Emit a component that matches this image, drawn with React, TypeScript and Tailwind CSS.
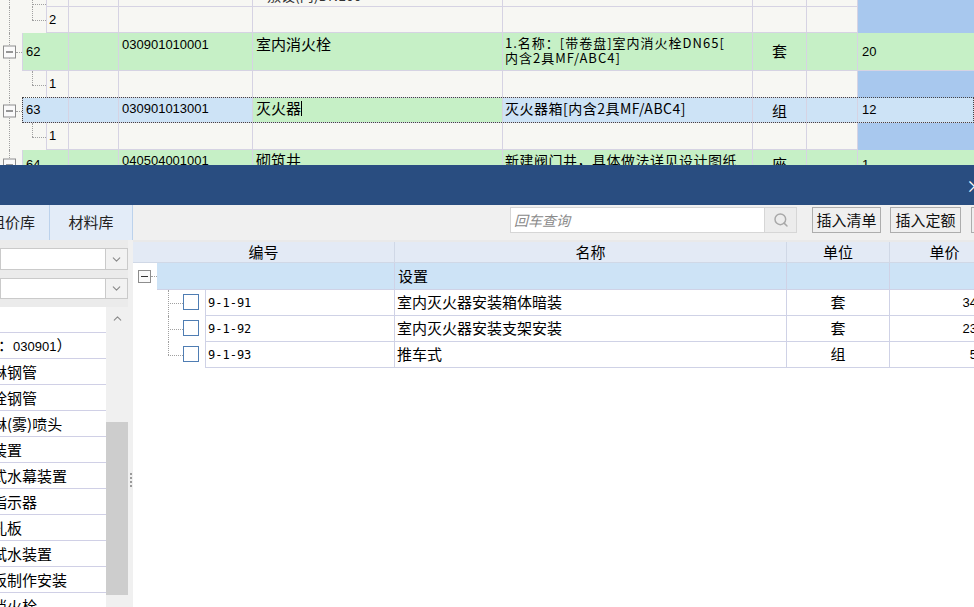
import React from "react";
import { ChevronDown, ChevronUp, Search } from "lucide-react";

const NUM = "font-['Liberation_Sans','Noto_Sans_CJK_SC',sans-serif]";
const MONO = "font-['DejaVu_Sans_Mono','Noto_Sans_CJK_SC',monospace]";
const GREEN = "bg-[#c6f0c6]";
const SEL = "bg-[#cde3f6]";
const BLANK = "bg-[#f7f7f3]";
const BLUE = "bg-[#a8c8ee]";

function Toggle() {
  return (
    <div className="w-[13px] h-[13px] border border-[#8d8d8d] bg-[#fafafa] flex items-center justify-center">
      <div className="w-[7px] h-px bg-[#333]" />
    </div>
  );
}

function ParentTree() {
  return (
    <div className="relative w-[22px] shrink-0 self-stretch">
      <div className="absolute left-[9px] top-0 bottom-0 border-l border-dotted border-[#a0a0a0]" />
      <div className="absolute left-[16px] w-[6px] top-1/2 border-t border-dotted border-[#a0a0a0]" />
      <div className="absolute left-[3px] top-1/2 -translate-y-1/2">
        <Toggle />
      </div>
    </div>
  );
}

function ChildTree({ full }: { full?: boolean }) {
  return (
    <div className="relative w-[46px] shrink-0 self-stretch">
      <div className="absolute left-[9px] top-0 bottom-0 border-l border-dotted border-[#a0a0a0]" />
      <div
        className={
          full
            ? "absolute left-[32px] top-0 bottom-0 border-l border-dotted border-[#a0a0a0]"
            : "absolute left-[32px] top-0 h-1/2 border-l border-dotted border-[#a0a0a0]"
        }
      />
      <div className="absolute left-[32px] w-[14px] top-1/2 border-t border-dotted border-[#a0a0a0]" />
    </div>
  );
}

function C({
  w,
  bg,
  children,
  cls = "",
}: {
  w: string;
  bg: string;
  children?: React.ReactNode;
  cls?: string;
}) {
  return (
    <div className={`${w} ${bg} shrink-0 border-r border-b border-[#d6d3e3] overflow-hidden ${cls}`}>
      {children}
    </div>
  );
}

function ChildRow({
  h,
  n,
  full,
  nameText,
}: {
  h: string;
  n?: string;
  full?: boolean;
  nameText?: React.ReactNode;
}) {
  return (
    <div className={`flex ${h}`}>
      <ChildTree full={full} />
      <C w="w-[23px]" bg={BLANK} cls={`border-l ${NUM} text-[13px] flex items-center pl-[2px]`}>
        {n}
      </C>
      <C w="w-[50px]" bg={BLANK} />
      <C w="w-[134px]" bg={BLANK} />
      <C w="w-[250px]" bg={BLANK}>
        {nameText}
      </C>
      <C w="w-[250px]" bg={BLANK} />
      <C w="w-[54px]" bg={BLANK} />
      <C w="w-[51px]" bg={BLANK} />
      <div className={`flex-1 ${BLUE}`} />
    </div>
  );
}

function TopGrid() {
  return (
    <div className={`h-[165px] shrink-0 overflow-hidden ${BLANK} text-[15px] text-black`}>
      <ChildRow
        h="h-[7px]"
        full
        nameText={<div className="text-[14px] leading-[14px] mt-[-12px] pl-[14px] text-[#333]">敷设(内)DN100</div>}
      />
      <ChildRow h="h-[26px]" n="2" />
      {/* row 62 */}
      <div className="flex h-[38px]">
        <ParentTree />
        <C w="w-[47px]" bg={GREEN} cls={`border-l ${NUM} text-[13px] flex items-center pl-[3px]`}>
          62
        </C>
        <C w="w-[50px]" bg={GREEN} />
        <C w="w-[134px]" bg={GREEN} cls={`${NUM} text-[13px] pl-[3px] pt-[5px] leading-[14px]`}>
          030901010001
        </C>
        <C w="w-[250px]" bg={GREEN} cls="pl-[3px] pt-[2px] leading-[18px]">
          室内消火栓
        </C>
        <C w="w-[250px]" bg={GREEN} cls="pl-[2px] pt-[2px] text-[13px] leading-[15px] tracking-[1px]">
          <div>1.名称：[带卷盘]室内消火栓DN65[</div>
          <div>内含2具MF/ABC4]</div>
        </C>
        <C w="w-[54px]" bg={GREEN} cls="flex items-center justify-center">
          套
        </C>
        <C w="w-[51px]" bg={GREEN} />
        <div className={`flex-1 ${GREEN} border-b border-[#d6d3e3] ${NUM} text-[13px] flex items-center pl-[4px]`}>20</div>
      </div>
      <ChildRow h="h-[27px]" n="1" />
      {/* row 63 selected */}
      <div className="flex h-[25px] relative">
        <ParentTree />
        <C w="w-[47px]" bg={SEL} cls={`border-l ${NUM} text-[13px] flex items-center pl-[3px]`}>
          63
        </C>
        <C w="w-[50px]" bg={SEL} />
        <C w="w-[134px]" bg={SEL} cls={`${NUM} text-[13px] pl-[3px] pt-[4px] leading-[14px]`}>
          030901013001
        </C>
        <C w="w-[250px]" bg={GREEN} cls="pl-[3px] pt-[1px] leading-[18px] flex items-start">
          <span>灭火器</span>
          <span className="inline-block w-px h-[15px] bg-black mt-[2px]" />
        </C>
        <C w="w-[250px]" bg={SEL} cls="pl-[2px] pt-[2px] text-[14px] leading-[16px] tracking-[0.5px]">
          灭火器箱[内含2具MF/ABC4]
        </C>
        <C w="w-[54px]" bg={SEL} cls="flex items-center justify-center pt-[3px]">
          组
        </C>
        <C w="w-[51px]" bg={SEL} />
        <div className={`flex-1 ${SEL} border-b border-[#d6d3e3] ${NUM} text-[13px] flex items-center pl-[4px]`}>12</div>
        <div className="absolute left-[22px] right-0 top-[-1px] bottom-0 border border-dotted border-[#444] pointer-events-none" />
      </div>
      <ChildRow h="h-[27px]" n="1" />
      {/* row 64 */}
      <div className="flex h-[30px]">
        <ParentTree />
        <C w="w-[47px]" bg={GREEN} cls={`border-l ${NUM} text-[13px] flex items-center pl-[3px]`}>
          64
        </C>
        <C w="w-[50px]" bg={GREEN} />
        <C w="w-[134px]" bg={GREEN} cls={`${NUM} text-[13px] pl-[3px] pt-[4px] leading-[14px]`}>
          040504001001
        </C>
        <C w="w-[250px]" bg={GREEN} cls="pl-[3px] pt-[1px] leading-[18px]">
          砌筑井
        </C>
        <C w="w-[250px]" bg={GREEN} cls="pl-[2px] pt-[2px] text-[14px] leading-[16px] tracking-[0.5px]">
          新建阀门井，具体做法详见设计图纸
        </C>
        <C w="w-[54px]" bg={GREEN} cls="flex items-center justify-center">
          座
        </C>
        <C w="w-[51px]" bg={GREEN} />
        <div className={`flex-1 ${GREEN} border-b border-[#d6d3e3] ${NUM} text-[13px] flex items-center pl-[4px]`}>1</div>
      </div>
    </div>
  );
}

function Combo({ h }: { h: string }) {
  return (
    <div className={`flex ${h} shrink-0`}>
      <div className="flex-1 bg-white border border-[#cacaca]" />
      <div className="w-[22px] bg-[#f2f2f2] border border-l-0 border-[#cacaca] flex items-center justify-center">
        <ChevronDown size={13} strokeWidth={2} className="text-[#8a8a8a]" />
      </div>
    </div>
  );
}

const listItems: { t: React.ReactNode; ml: string }[] = [
  { t: "", ml: "ml-0" },
  {
    t: (
      <>
        水灭火系统（编码：<span className={`${NUM} text-[13px]`}>030901</span>）
      </>
    ),
    ml: "ml-[-122px]",
  },
  { t: "水喷淋钢管", ml: "ml-[-38px]" },
  { t: "消火栓钢管", ml: "ml-[-38px]" },
  { t: "水喷淋(雾)喷头", ml: "ml-[-38px]" },
  { t: "报警装置", ml: "ml-[-38px]" },
  { t: "温感式水幕装置", ml: "ml-[-38px]" },
  { t: "水流指示器", ml: "ml-[-38px]" },
  { t: "减压孔板", ml: "ml-[-38px]" },
  { t: "末端试水装置", ml: "ml-[-38px]" },
  { t: "集热板制作安装", ml: "ml-[-38px]" },
  { t: "室内消火栓", ml: "ml-[-38px]" },
];

function LeftPanel() {
  return (
    <div className="w-[128px] shrink-0 bg-[#ebebeb] flex flex-col overflow-hidden">
      <div className="mt-[8px]">
        <Combo h="h-[22px]" />
      </div>
      <div className="mt-[8px]">
        <Combo h="h-[21px]" />
      </div>
      <div className="mt-[8px] flex flex-1 min-h-0">
        <div className="w-[106px] bg-white overflow-hidden">
          {listItems.map((it, i) => (
            <div
              key={i}
              className="h-[26px] border-b border-[#d0d0e6] flex items-center whitespace-nowrap text-[15px] leading-[20px] overflow-hidden"
            >
              <span className={`${it.ml} shrink-0`}>{it.t}</span>
            </div>
          ))}
        </div>
        <div className="w-[22px] flex flex-col">
          <div className="h-[115px] bg-[#f0f0f0] flex justify-center pt-[5px]">
            <ChevronUp size={13} strokeWidth={2} className="text-[#8a8a8a]" />
          </div>
          <div className="h-[173px] bg-[#cdcdcd]" />
          <div className="flex-1 bg-[#f0f0f0]" />
        </div>
      </div>
    </div>
  );
}

function Splitter() {
  return (
    <div className="w-[5px] shrink-0 bg-[#f0f0f0] flex flex-col items-center pt-[233px] gap-[2px]">
      <div className="w-[2px] h-[2px] bg-[#9a9a9a]" />
      <div className="w-[2px] h-[2px] bg-[#9a9a9a]" />
      <div className="w-[2px] h-[2px] bg-[#9a9a9a]" />
      <div className="w-[2px] h-[2px] bg-[#9a9a9a]" />
    </div>
  );
}

const rows = [
  { code: "9-1-91", name: "室内灭火器安装箱体暗装", unit: "套", price: "34.56" },
  { code: "9-1-92", name: "室内灭火器安装支架安装", unit: "套", price: "23.48" },
  { code: "9-1-93", name: "推车式", unit: "组", price: "5.92" },
];

const BL = "border-[#cfd2e6]";

function RightTable() {
  return (
    <div className="flex-1 min-w-0 bg-white overflow-hidden text-[15px] text-black">
      <div className="h-[2px] bg-[#e9e9e9]" />
      <div className="flex w-[867px] h-[21px] bg-[#e3eaf5] leading-[20px]">
        <div className="w-[262px] shrink-0 border-r border-b border-[#d0d8e6] flex items-center justify-center">编号</div>
        <div className="w-[392px] shrink-0 border-r border-b border-[#d0d8e6] flex items-center justify-center">名称</div>
        <div className="w-[103px] shrink-0 border-r border-b border-[#d0d8e6] flex items-center justify-center">单位</div>
        <div className="w-[110px] shrink-0 border-r border-b border-[#d0d8e6] flex items-center justify-center">单价</div>
      </div>
      <div className="flex w-[867px] h-[27px]">
        <div className="w-[24px] shrink-0 relative bg-white">
          <div className="absolute left-[5px] top-[7px]">
            <Toggle />
          </div>
          <div className="absolute left-[18px] w-[6px] top-[13px] border-t border-dotted border-[#a0a0a0]" />
        </div>
        <div className={`w-[238px] shrink-0 ${SEL} border-r border-b ${BL}`} />
        <div className={`w-[392px] shrink-0 ${SEL} border-r border-b ${BL} flex items-center pl-[3px]`}>设置</div>
        <div className={`w-[103px] shrink-0 ${SEL} border-r border-b ${BL}`} />
        <div className={`w-[110px] shrink-0 ${SEL} border-r border-b ${BL}`} />
      </div>
      {rows.map((r, i) => {
        const last = i === rows.length - 1;
        return (
          <div key={r.code} className="flex w-[867px] h-[26px]">
            <div className="w-[72px] shrink-0 relative">
              <div
                className={
                  last
                    ? "absolute left-[35px] top-0 h-[13px] border-l border-dotted border-[#a0a0a0]"
                    : "absolute left-[35px] top-0 bottom-0 border-l border-dotted border-[#a0a0a0]"
                }
              />
              <div className="absolute left-[35px] top-[13px] w-[15px] border-t border-dotted border-[#a0a0a0]" />
              <div className="absolute left-[50px] top-[4px] w-[16px] h-[16px] border border-[#4f7db3] bg-white" />
            </div>
            <div className={`w-[190px] shrink-0 border-l border-r border-b ${BL} flex items-center pl-[2px] ${MONO} text-[12px]`}>
              {r.code}
            </div>
            <div className={`w-[392px] shrink-0 border-r border-b ${BL} flex items-center pl-[2px]`}>{r.name}</div>
            <div className={`w-[103px] shrink-0 border-r border-b ${BL} flex items-center justify-center`}>{r.unit}</div>
            <div className={`w-[110px] shrink-0 border-r border-b ${BL} flex items-center justify-end pr-[4px] ${NUM} text-[13px]`}>
              {r.price}
            </div>
          </div>
        );
      })}
    </div>
  );
}

function Dialog() {
  return (
    <div className="flex-1 flex flex-col min-h-0">
      <div className="h-[40px] shrink-0 bg-[#294d80] flex items-center justify-end overflow-hidden">
        <span className="text-white text-[17px] mr-[-9px] leading-none">×</span>
      </div>
      <div className="h-[35px] shrink-0 bg-[#f0f0f0] flex items-start overflow-hidden">
        <div className="w-[50px] h-[35px] shrink-0 bg-[#e3ecf8] border-r border-[#bcd2ec] flex items-center overflow-hidden whitespace-nowrap">
          <span className="ml-[-10px] text-[15px] text-[#222]">组价库</span>
        </div>
        <div className="w-[83px] h-[35px] shrink-0 bg-[#e3ecf8] border-r border-[#bcd2ec] flex items-center justify-center text-[15px] text-[#222]">
          材料库
        </div>
        <div className="ml-[377px] mt-[2px] w-[255px] h-[26px] shrink-0 bg-white border border-[#d6d6d6] flex items-center pl-[3px]">
          <span className="italic text-[14px] text-[#8a8a8a]">回车查询</span>
        </div>
        <div className="mt-[2px] w-[32px] h-[26px] shrink-0 bg-[#ececec] border border-l-0 border-[#d6d6d6] flex items-center justify-center">
          <Search size={16} strokeWidth={2.2} className="text-[#a8a8a8]" />
        </div>
        <div className="ml-[15px] mt-[2px] w-[69px] h-[26px] shrink-0 bg-[#efefef] border border-[#adadad] flex items-center justify-center text-[15px] text-[#111]">
          插入清单
        </div>
        <div className="ml-[9px] mt-[2px] w-[71px] h-[26px] shrink-0 bg-[#efefef] border border-[#adadad] flex items-center justify-center text-[15px] text-[#111]">
          插入定额
        </div>
        <div className="ml-[10px] mt-[2px] w-[60px] h-[26px] shrink-0 bg-[#efefef] border border-[#adadad]" />
      </div>
      <div className="flex-1 flex min-h-0">
        <LeftPanel />
        <Splitter />
        <RightTable />
      </div>
    </div>
  );
}

export default function App() {
  return (
    <div className="w-[974px] h-[607px] overflow-hidden flex flex-col bg-white font-['Noto_Sans_CJK_SC',sans-serif] text-black">
      <TopGrid />
      <Dialog />
    </div>
  );
}
